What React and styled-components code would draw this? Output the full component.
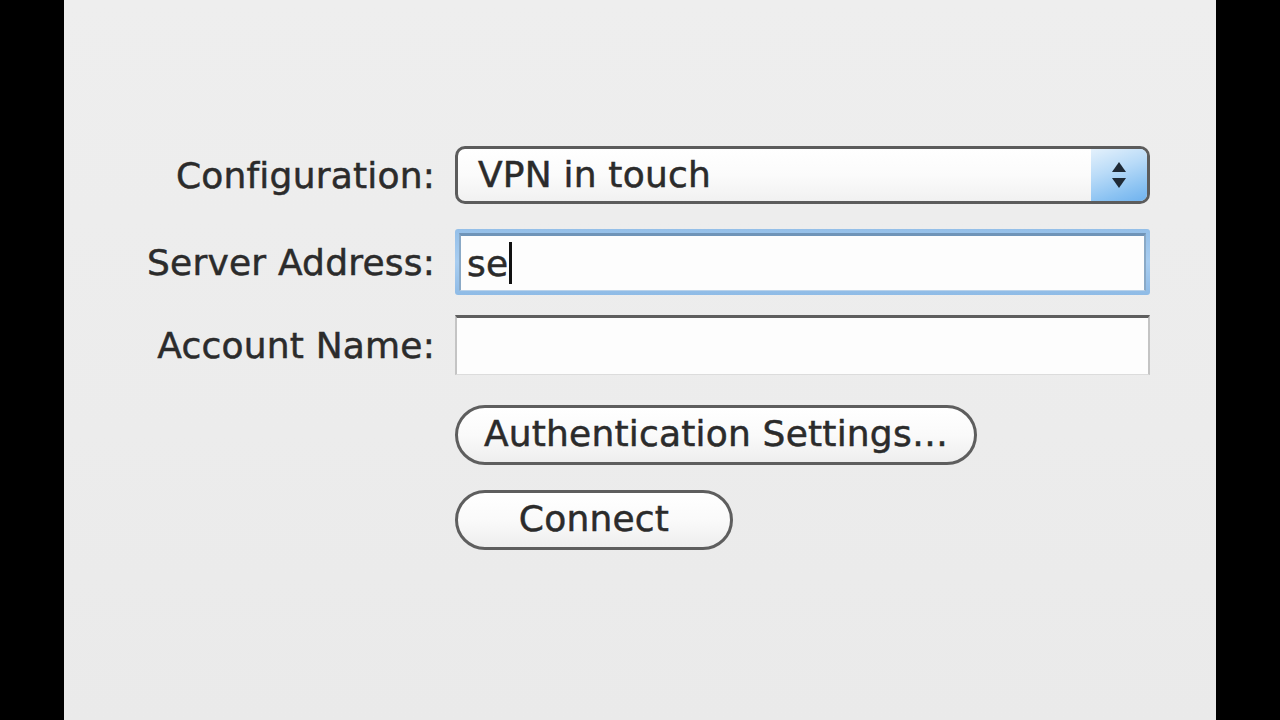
import React from "react";
import styled, { createGlobalStyle } from "styled-components";

const Global = createGlobalStyle`
  html, body {
    margin: 0;
    padding: 0;
    background: #000;
  }
  body {
    font-family: "DejaVu Sans", "Liberation Sans", sans-serif;
  }
`;

const Screen = styled.div`
  width: 1280px;
  height: 720px;
  display: flex;
  justify-content: center;
  background: #000;
  overflow: hidden;
`;

const Pane = styled.div`
  width: 1152px;
  height: 720px;
  background: linear-gradient(180deg, #eeeeee 0%, #ececec 60%, #eaeaea 100%);
  padding-top: 146px;
  box-sizing: border-box;
`;

const Form = styled.div`
  display: flex;
  flex-direction: column;
`;

const Row = styled.div`
  display: grid;
  grid-template-columns: 371px 698px;
  column-gap: 20px;
  align-items: center;
  height: ${(p) => p.h}px;
  margin-top: ${(p) => p.space || 0}px;
`;

const text = `
  font-size: 36px;
  letter-spacing: 0.2px;
  color: #2b2b2b;
  -webkit-text-stroke: 0.5px #2b2b2b;
`;

const Label = styled.div`
  ${text}
  text-align: right;
  white-space: nowrap;
`;

const Popup = styled.div`
  width: 695px;
  height: 58px;
  box-sizing: border-box;
  border: 3px solid #5c5c5c;
  border-radius: 10px;
  background: linear-gradient(180deg, #ffffff 0%, #fbfbfb 50%, #f1f1f1 100%);
  display: flex;
  align-items: center;
  overflow: hidden;
`;

const PopupText = styled.div`
  ${text}
  flex: 1;
  padding-left: 20px;
  padding-bottom: 2px;
`;

const Stepper = styled.div`
  width: 56px;
  align-self: stretch;
  background: linear-gradient(160deg, #e4f1fc 0%, #b9dbf8 40%, #8cc3f2 75%, #6fb2ee 100%);
  display: flex;
  align-items: center;
  justify-content: center;
`;

const FieldWrap = styled.div`
  width: 695px;
  height: ${(p) => (p.focus ? 66 : 60)}px;
  box-sizing: border-box;
  padding: ${(p) => (p.focus ? "4px" : "0")};
  border-radius: 3px;
  background: ${(p) =>
    p.focus ? "linear-gradient(180deg, #94bfe8 0%, #a8cdf0 50%, #8fbbe6 100%)" : "transparent"};
`;

const Field = styled.div`
  ${text}
  height: 100%;
  box-sizing: border-box;
  background: #fdfdfd;
  border-top: 3px solid ${(p) => (p.focus ? "#6f94b8" : "#5e5e5e")};
  border-left: 2px solid ${(p) => (p.focus ? "#8aa9c6" : "#c4c4c4")};
  border-right: 2px solid ${(p) => (p.focus ? "#8aa9c6" : "#c4c4c4")};
  border-bottom: 1px solid ${(p) => (p.focus ? "#b9d2ea" : "#dcdcdc")};
  display: flex;
  align-items: center;
  padding-left: 6px;
`;

const Caret = styled.span`
  display: inline-block;
  width: 3px;
  height: 42px;
  background: #111;
  margin-left: 1px;
`;

const PillButton = styled.button`
  ${text}
  width: ${(p) => p.w}px;
  height: 60px;
  box-sizing: border-box;
  border: 3px solid #5e5e5e;
  border-radius: 30px;
  background: linear-gradient(180deg, #ffffff 0%, #fafafa 50%, #eeeeee 100%);
  font-family: "DejaVu Sans", "Liberation Sans", sans-serif;
  padding: 0 0 3px 0;
  justify-self: start;
  white-space: nowrap;
`;

function Arrows() {
  return (
    <svg width="20" height="30" viewBox="0 0 20 30">
      <path d="M10 2 L17 12 L3 12 Z" fill="#1f2a36" />
      <path d="M10 28 L17 18 L3 18 Z" fill="#1f2a36" />
    </svg>
  );
}

export default function App() {
  return (
    <Screen>
      <Global />
      <Pane>
        <Form>
          <Row h={58}>
            <Label>Configuration:</Label>
            <Popup>
              <PopupText>VPN in touch</PopupText>
              <Stepper>
                <Arrows />
              </Stepper>
            </Popup>
          </Row>
          <Row h={66} space={25}>
            <Label>Server Address:</Label>
            <FieldWrap focus>
              <Field focus>
                se
                <Caret />
              </Field>
            </FieldWrap>
          </Row>
          <Row h={60} space={20}>
            <Label>Account Name:</Label>
            <FieldWrap>
              <Field />
            </FieldWrap>
          </Row>
          <Row h={60} space={30}>
            <span />
            <PillButton w={522}>Authentication Settings…</PillButton>
          </Row>
          <Row h={60} space={25}>
            <span />
            <PillButton w={278}>Connect</PillButton>
          </Row>
        </Form>
      </Pane>
    </Screen>
  );
}
